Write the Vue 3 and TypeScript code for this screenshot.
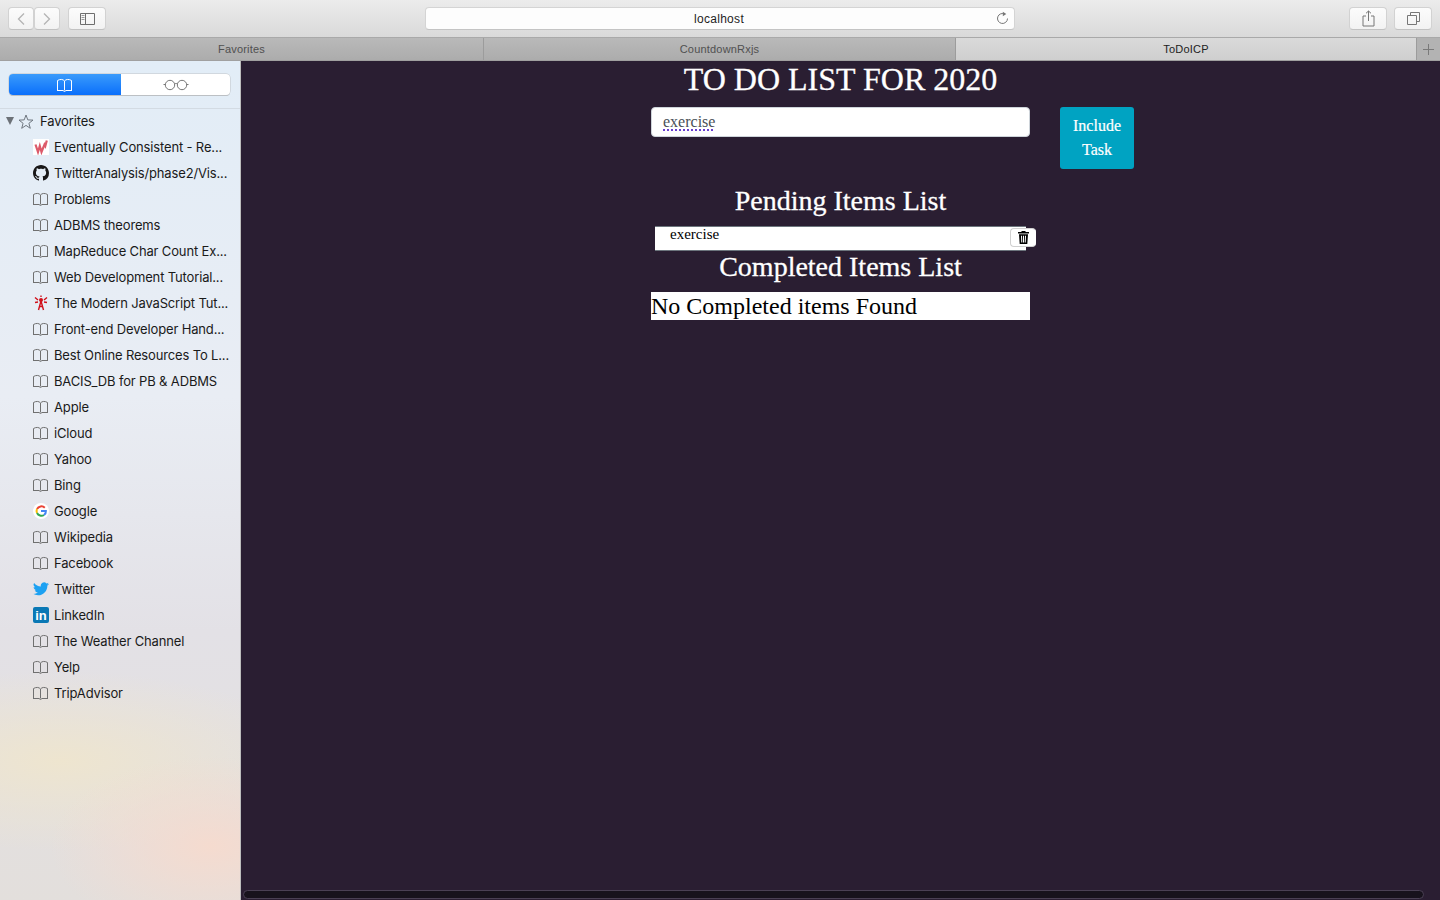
<template>
  <div class="window">
    <header class="toolbar">
      <div class="nav-group">
        <button class="tool-btn nav-btn">
          <svg width="10" height="14" viewBox="0 0 10 14"><path d="M8 1.500 2.500 7 8 12.500" fill="none" stroke="#b4b4b4" stroke-width="1.300" /></svg>
        </button>
        <button class="tool-btn nav-btn">
          <svg width="10" height="14" viewBox="0 0 10 14"><path d="M2 1.500 7.500 7 2 12.500" fill="none" stroke="#b4b4b4" stroke-width="1.300" /></svg>
        </button>
      </div>
      <button class="tool-btn sidebar-btn">
        <svg width="15" height="12" viewBox="0 0 15 12"><path d="M.5.5h14v11H.5zM5.500.5v11" fill="none" stroke="#6e6e6e" /><path d="M1.500 2.500h3M1.500 4.500h3M1.500 6.500h3" stroke="#9a9a9a" /></svg>
      </button>
      <div class="address">
        <span class="host">localhost</span>
        <svg class="reload" width="13" height="14" viewBox="0 0 13 14"><path d="M8.900 3.100A5 5 0 1 0 11.500 7.500" fill="none" stroke="#777" stroke-width="1" /><path d="M6.800.8 10.300 3 6.800 5.200z" fill="#777" /></svg>
      </div>
      <div class="right-tools">
        <button class="tool-btn right-btn">
          <svg width="13" height="17" viewBox="0 0 13 17"><path d="M4 6H1v10h11V6H9M6.500 11V1M4 3.300 6.500 1 9 3.300" fill="none" stroke="#777" /></svg>
        </button>
        <button class="tool-btn right-btn">
          <svg width="13" height="13" viewBox="0 0 13 13"><path d="M.5 3.500h9v9h-9zM3.500 3.500v-3h9v9h-3" fill="none" stroke="#777" /></svg>
        </button>
      </div>
    </header>

    <nav class="tabs">
      <div class="tab tab-one">Favorites</div>
      <div class="tab tab-two">CountdownRxjs</div>
      <div class="tab tab-active">ToDoICP</div>
      <div class="tab-add">
        <svg width="11" height="11" viewBox="0 0 11 11"><path d="M5.500 0v11M0 5.500h11" stroke="#7a7a7a" /></svg>
      </div>
    </nav>

    <div class="body">
      <aside class="sidebar">
        <div class="segment-wrap">
          <div class="segment">
            <div class="seg seg-on">
              <svg width="16" height="14" viewBox="0 0 16 14"><path d="M.5 13V2.500C3 1 6 1 7.500 3 9 1 12 1 14.500 2.500V13M7.500 3v9.500M.5 12.500H6l1.500 1 1.500-1h5.500" fill="none" stroke="#fff" /></svg>
            </div>
            <div class="seg seg-off">
              <svg width="26" height="12" viewBox="0 0 26 12"><circle cx="7" cy="6" r="4.700" fill="none" stroke="#777" /><circle cx="19" cy="6" r="4.700" fill="none" stroke="#777" /><path d="M11.500 5c1-.7 2-.7 3 0M2.300 5.500H.5M23.700 5.500h1.800" fill="none" stroke="#777" /></svg>
            </div>
          </div>
        </div>
        <div class="fav-head">
          <span class="caret"></span>
          <svg class="star" width="16" height="15" viewBox="0 0 16 15"><path d="m8 1 1.800 4.900 5.200.2-4.100 3.200 1.400 5L8 11.400l-4.300 2.900 1.400-5L1 6.100l5.200-.2z" fill="none" stroke="#6f7780" /></svg>
          <span>Favorites</span>
        </div>
        <ul class="fav-list">
          <li v-for="item in favorites" :key="item.label" class="fav">
            <span class="fav-icon">
              <svg v-if="item.icon === 'book'" width="16" height="14" viewBox="0 0 16 14"><path d="M.5 13V2.500C3 1 6 1 7.500 3 9 1 12 1 14.500 2.500V13M7.500 3v9.500M.5 12.500H6l1.500 1 1.500-1h5.500" fill="none" stroke="#707070" /></svg>
              <svg v-else-if="item.icon === 'wave'" width="16" height="16" viewBox="0 0 16 16"><rect width="16" height="16" fill="#fff" /><path d="M2.500 5.500 5 13l1.800-6 1.700 6 3-7.500.8 1.500 1.500-5.500" fill="none" stroke="#dc5a6a" stroke-width="2.200" /></svg>
              <svg v-else-if="item.icon === 'github'" width="16" height="16" viewBox="0 0 16 16"><path fill="#181717" d="M8 0C3.580 0 0 3.580 0 8c0 3.540 2.290 6.530 5.470 7.590.4.070.55-.17.55-.38 0-.19-.01-.82-.01-1.490-2.010.37-2.530-.49-2.690-.94-.09-.23-.48-.94-.82-1.130-.28-.15-.68-.52-.01-.53.630-.01 1.080.58 1.230.82.720 1.210 1.870.87 2.330.66.070-.52.280-.87.510-1.070-1.780-.2-3.640-.89-3.640-3.950 0-.87.310-1.590.82-2.150-.08-.2-.36-1.020.08-2.120 0 0 .67-.21 2.200.82.640-.18 1.320-.27 2-.27s1.360.09 2 .27c1.530-1.040 2.200-.82 2.200-.82.440 1.100.16 1.920.08 2.120.51.560.82 1.270.82 2.150 0 3.070-1.870 3.750-3.650 3.950.29.250.54.730.54 1.480 0 1.070-.01 1.930-.01 2.200 0 .21.150.46.550.38A8.013 8.013 0 0 0 16 8c0-4.420-3.580-8-8-8z" /></svg>
              <svg v-else-if="item.icon === 'tower'" width="16" height="16" viewBox="0 0 16 16"><path d="M8 6 5.500 15M8 6l2.500 9M6.500 11.500h3M2 2.500 5 5M14 2.500 11 5M2 7.500 5 7M14 7.500 11 7M8 .5V2" fill="none" stroke="#d0101a" stroke-width="1.400" /><circle cx="8" cy="5" r="2" fill="#d0101a" /></svg>
              <svg v-else-if="item.icon === 'google'" width="16" height="16" viewBox="0 0 16 16"><circle cx="8" cy="8" r="8" fill="#fff" /><path d="M11.800 4.700A5 5 0 0 0 4 6" fill="none" stroke="#ea4335" stroke-width="2" /><path d="M4 6a5 5 0 0 0 0 4" fill="none" stroke="#fbbc05" stroke-width="2" /><path d="M4 10a5 5 0 0 0 7 2" fill="none" stroke="#34a853" stroke-width="2" /><path d="M11 12c1.300-1 2-2.400 1.900-4H8" fill="none" stroke="#4285f4" stroke-width="2" /></svg>
              <svg v-else-if="item.icon === 'twitter'" width="16" height="14" viewBox="0 0 24 20"><path fill="#1da1f2" d="M24 2.400a10 10 0 0 1-2.800.8A4.900 4.900 0 0 0 23.300.5a9.800 9.800 0 0 1-3.100 1.200 4.900 4.900 0 0 0-8.400 4.500A14 14 0 0 1 1.700.9a4.900 4.900 0 0 0 1.500 6.600 4.900 4.900 0 0 1-2.200-.6c0 2.400 1.700 4.400 3.900 4.900a4.900 4.900 0 0 1-2.200.1 4.900 4.900 0 0 0 4.600 3.400A9.900 9.900 0 0 1 0 17.300 14 14 0 0 0 7.500 19.500c9.100 0 14.300-7.700 14-14.600A10 10 0 0 0 24 2.400z" /></svg>
              <span v-else class="linkedin">in</span>
            </span>
            <span class="fav-label">{{ item.label }}</span>
          </li>
        </ul>
      </aside>

      <main class="page">
        <h1 class="title">TO DO LIST FOR 2020</h1>
        <div class="add-row">
          <div class="task-input"><span class="spell">exercise</span></div>
          <button class="include">Include Task</button>
        </div>
        <h2 class="pending-head">Pending Items List</h2>
        <div class="pending-row">
          <span>exercise</span>
          <button class="trash">
            <svg width="11" height="13" viewBox="0 0 11 13"><path fill="#000" d="M3.800 0h3.400l.6 1H11v1.500H0V1h3.200zM1 3.200h9l-.7 9.800H1.700zm2 1.500.3 6.800h1L4 4.700zm2 0v6.800h1V4.700zm2 0-.3 6.800h1L8 4.700z" /></svg>
          </button>
        </div>
        <h2 class="completed-head">Completed Items List</h2>
        <div class="empty">No Completed items Found</div>
        <div class="scrollbar"></div>
      </main>
    </div>
  </div>
</template>

<script setup lang="ts">
type Favorite = {
  label: string
  icon: string
}

const favorites: Favorite[] = [
  { label: 'Eventually Consistent - Re...', icon: 'wave' },
  { label: 'TwitterAnalysis/phase2/Vis...', icon: 'github' },
  { label: 'Problems', icon: 'book' },
  { label: 'ADBMS theorems', icon: 'book' },
  { label: 'MapReduce Char Count Ex...', icon: 'book' },
  { label: 'Web Development Tutorial...', icon: 'book' },
  { label: 'The Modern JavaScript Tut...', icon: 'tower' },
  { label: 'Front-end Developer Hand...', icon: 'book' },
  { label: 'Best Online Resources To L...', icon: 'book' },
  { label: 'BACIS_DB for PB & ADBMS', icon: 'book' },
  { label: 'Apple', icon: 'book' },
  { label: 'iCloud', icon: 'book' },
  { label: 'Yahoo', icon: 'book' },
  { label: 'Bing', icon: 'book' },
  { label: 'Google', icon: 'google' },
  { label: 'Wikipedia', icon: 'book' },
  { label: 'Facebook', icon: 'book' },
  { label: 'Twitter', icon: 'twitter' },
  { label: 'LinkedIn', icon: 'linkedin' },
  { label: 'The Weather Channel', icon: 'book' },
  { label: 'Yelp', icon: 'book' },
  { label: 'TripAdvisor', icon: 'book' },
]
</script>

<style scoped>
.window {
  display: flex;
  flex-direction: column;
  height: 900px;
  overflow: hidden;
  font-family: 'Liberation Sans', Arial, sans-serif;
}

.toolbar {
  display: flex;
  align-items: center;
  height: 38px;
  padding: 0 8px;
  box-sizing: border-box;
  background: linear-gradient(#ececec, #d9d9d9);
  border-bottom: 1px solid #a9a9a9;
  flex-shrink: 0;
}

.tool-btn {
  display: flex;
  align-items: center;
  justify-content: center;
  height: 23px;
  padding: 0;
  background: linear-gradient(#fcfcfc, #f2f2f2);
  border: 1px solid #d2d2d2;
  border-bottom-color: #c2c2c2;
  border-radius: 4px;
}

.nav-group {
  display: flex;
}

.nav-btn {
  width: 26px;
}

.sidebar-btn {
  width: 38px;
  margin-left: 8px;
}

.address {
  position: relative;
  display: flex;
  align-items: center;
  justify-content: center;
  width: 590px;
  height: 23px;
  margin-left: 319px;
  padding: 1px 2px 0 0;
  font-size: 12px;
  color: #1e1e1e;
  background: #fdfdfd;
  border: 1px solid #d4d4d4;
  border-bottom-color: #c4c4c4;
  border-radius: 4px;
  box-sizing: border-box;
}

.host {
  letter-spacing: 0.3px;
}

.reload {
  position: absolute;
  right: 5px;
  top: 3px;
}

.right-tools {
  display: flex;
  gap: 7px;
  margin-left: auto;
}

.right-btn {
  width: 38px;
}

.tabs {
  display: flex;
  height: 22px;
  font-size: 11px;
  letter-spacing: 0.2px;
  border-bottom: 1px solid #a0a0a0;
  flex-shrink: 0;
}

.tab {
  display: flex;
  align-items: center;
  justify-content: center;
  color: #505050;
  background: linear-gradient(#b9b9b9, #acacac);
  border-right: 1px solid #9c9c9c;
  box-sizing: border-box;
}

.tab-one {
  width: 484px;
}

.tab-two {
  width: 472px;
}

.tab-active {
  width: 461px;
  color: #222;
  background: linear-gradient(#dadada, #cfcfcf);
}

.tab-add {
  display: flex;
  flex: 1;
  align-items: center;
  justify-content: center;
  background: #b3b3b3;
}

.body {
  display: flex;
  flex: 1;
  min-height: 0;
}

.sidebar {
  width: 241px;
  flex-shrink: 0;
  box-sizing: border-box;
  background:
    radial-gradient(160px 90px at 210px 785px, #f5dbcf 0%, rgba(245, 219, 207, 0) 100%),
    radial-gradient(260px 90px at 60px 700px, #eee5cf 0%, rgba(238, 229, 207, 0) 100%),
    linear-gradient(180deg, #e2edf7 0%, #e9edf4 40%, #e3e1e6 68%, #e3dfdc 100%);
  border-right: 1px solid #bdbdbd;
  font-family: Inter, 'Liberation Sans', sans-serif;
  font-size: 13px;
  letter-spacing: -0.15px;
  color: #1a1a1a;
}

.segment-wrap {
  height: 48px;
  padding: 13px 9px 0;
  box-sizing: border-box;
  border-bottom: 1px solid #d3dbe3;
}

.segment {
  display: flex;
  width: 221px;
  height: 21px;
  background: #fff;
  border-radius: 4px;
  box-shadow: 0 0 0 0.5px #c0c4c8, 0 1px 0 #b8bcc0;
  overflow: hidden;
}

.seg {
  display: flex;
  align-items: center;
  justify-content: center;
}

.seg-on {
  width: 112px;
  background: linear-gradient(#3a9bfb, #0a6ffb);
}

.seg-off {
  flex: 1;
}

.fav-head {
  display: flex;
  align-items: center;
  height: 24px;
  margin-bottom: 1px;
}

.caret {
  width: 0;
  height: 0;
  margin-left: 6px;
  border-top: 8px solid #6c7278;
  border-left: 4.500px solid transparent;
  border-right: 4.500px solid transparent;
}

.star {
  margin-left: 4px;
  margin-right: 6px;
}

.fav-list {
  margin: 0;
  padding: 0;
  list-style: none;
}

.fav {
  display: flex;
  align-items: center;
  height: 26px;
}

.fav-icon {
  display: flex;
  align-items: center;
  justify-content: center;
  width: 16px;
  height: 16px;
  margin-left: 33px;
  margin-right: 5px;
}

.fav-label {
  white-space: nowrap;
}

.linkedin {
  display: block;
  width: 16px;
  height: 16px;
  font-family: 'Liberation Sans', sans-serif;
  font-size: 13px;
  font-weight: 700;
  line-height: 17px;
  text-align: center;
  color: #fff;
  background: #0a78b5;
  border-radius: 2px;
}

.page {
  position: relative;
  flex: 1;
  background: #2a1e32;
  font-family: 'Liberation Serif', 'Times New Roman', serif;
  color: #fff;
}

.title {
  margin: 0;
  height: 46px;
  font-size: 32px;
  font-weight: 400;
  line-height: 37px;
  text-align: center;
  -webkit-text-stroke: 0.3px #fff;
}

.add-row {
  display: grid;
  grid-template-columns: 1fr 379px 1fr;
  column-gap: 30px;
  align-items: start;
}

.task-input {
  grid-column: 2;
  height: 30px;
  padding-left: 11px;
  font-size: 16px;
  line-height: 27px;
  color: #495057;
  background: #fff;
  border: 1px solid #ced4da;
  border-radius: 4px;
  box-sizing: border-box;
}

.spell {
  text-decoration: underline dotted #6a3fd0 2px;
  text-underline-offset: 2px;
}

.include {
  width: 74px;
  height: 62px;
  padding: 0 10px;
  font-family: inherit;
  font-size: 16px;
  line-height: 24px;
  color: #fff;
  background: #00a3c2;
  border: none;
  border-radius: 3px;
  -webkit-text-stroke: 0.2px #fff;
}

.pending-head {
  margin: 0;
  padding-top: 16px;
  font-size: 28px;
  font-weight: 400;
  line-height: 32px;
  text-align: center;
  -webkit-text-stroke: 0.3px #fff;
}

.pending-row {
  position: relative;
  width: 371px;
  height: 25px;
  margin: 9px auto 0;
  padding-left: 15px;
  font-size: 15px;
  line-height: 15px;
  color: #000;
  background: #fff;
  border: 1px solid #6c757d;
  border-width: 1px 0;
  box-sizing: border-box;
}

.trash {
  position: absolute;
  top: 1px;
  right: -10px;
  display: flex;
  align-items: center;
  justify-content: center;
  width: 26px;
  height: 19px;
  padding: 0;
  background: #fff;
  border: 1px solid #d0d0d0;
  border-right-color: #fff;
  border-radius: 4px;
}

.completed-head {
  margin: 0;
  font-size: 28px;
  font-weight: 400;
  line-height: 32px;
  text-align: center;
  -webkit-text-stroke: 0.3px #fff;
}

.empty {
  width: 379px;
  height: 28px;
  margin: 9px auto 0;
  font-size: 24px;
  line-height: 28px;
  color: #000;
  background: #fff;
}

.scrollbar {
  position: absolute;
  left: 2px;
  right: 16px;
  bottom: 1px;
  height: 9px;
  background: #17121c;
  border: 1px solid #4a4054;
  border-radius: 5px;
  box-sizing: border-box;
}
</style>
